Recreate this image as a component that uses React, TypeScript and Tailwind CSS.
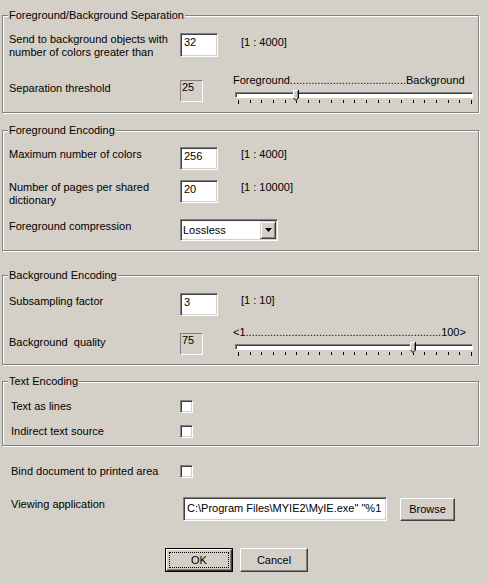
import React from 'react'

const sunken =
  'bg-white border border-t-[#808080] border-l-[#808080] border-r-white border-b-white shadow-[inset_1px_1px_0_#404040,inset_-1px_-1px_0_#d4d0c8]'

const Edit: React.FC<{ value: string; className?: string }> = ({ value, className = '' }) => (
  <div className={`${sunken} pl-[3px] pt-[2px] whitespace-nowrap overflow-hidden ${className}`}>{value}</div>
)

const ReadOnly: React.FC<{ value: string; className?: string }> = ({ value, className = '' }) => (
  <div className={`w-[23px] h-[22px] pl-[1px] border border-t-[#808080] border-l-[#808080] border-r-white border-b-white ${className}`}>
    {value}
  </div>
)

const Check: React.FC = () => <div className={`${sunken} w-[13px] h-[13px]`} />

const Group: React.FC<{ title: string; className?: string; children: React.ReactNode }> = ({
  title,
  className = '',
  children,
}) => (
  <div className={`relative w-[477px] border border-[#808080] shadow-[inset_1px_1px_0_#fff,1px_1px_0_#fff] ${className}`}>
    <span className="absolute left-[5px] top-[-7px] bg-[#d4d0c8] px-[1px] whitespace-nowrap">{title}</span>
    {children}
  </div>
)

const Slider: React.FC<{ label: string; value: number }> = ({ label, value }) => {
  const ticks = Array.from({ length: 21 }, (_, i) => i)
  return (
    <div className="w-[240px] flex flex-col">
      <div className="whitespace-nowrap">{label}</div>
      <div className="relative mt-[5px] ml-[2px] w-[238px] h-[6px] bg-white border border-t-[#808080] border-l-[#808080] border-r-white border-b-white shadow-[inset_1px_1px_0_#404040]">
        <svg
          className="absolute top-[-3px]"
          style={{ left: Math.round(value * 2.33) - 1 }}
          width="6"
          height="11"
          viewBox="0 0 6 11"
        >
          <polygon points="0,0 6,0 6,8 3,11 0,8" fill="#d4d0c8" />
          <polyline points="0.5,8 0.5,0.5 5,0.5" fill="none" stroke="#fff" strokeWidth="1" />
          <polyline points="5.5,0 5.5,8 3,10.5 0.5,8" fill="none" stroke="#000" strokeWidth="1" />
          <polyline points="4.5,1 4.5,8" fill="none" stroke="#808080" strokeWidth="1" />
        </svg>
      </div>
      <div className="mt-[2px] ml-[5px] w-[234px] flex justify-between items-start">
        {ticks.map((t) => (
          <div key={t} className={`w-px bg-black ${t === 0 || t === 20 ? 'h-[4px]' : 'h-[3px]'}`} />
        ))}
      </div>
    </div>
  )
}

export default function App() {
  return (
    <div className="w-[488px] h-[583px] bg-[#d4d0c8] text-black text-[11px] leading-[13px] font-['Liberation_Sans',Arial,sans-serif] flex flex-col pl-[2px] pt-[15px] overflow-hidden">
      <Group title="Foreground/Background Separation" className="h-[98px] pl-[6px] pt-[17px]">
        <div className="flex items-start">
          <div className="w-[171px]">
            Send to background objects with
            <br />
            number of colors greater than
          </div>
          <Edit value="32" className="w-[38px] h-[24px]" />
          <div className="ml-[23px] mt-[3px]">[1 : 4000]</div>
        </div>
        <div className="flex items-start mt-[15px]">
          <div className="w-[171px] mt-[8px]">Separation threshold</div>
          <ReadOnly value="25" className="mt-[6px]" />
          <div className="ml-[30px]">
            <Slider label={'Foreground' + '.'.repeat(38) + 'Background'} value={25} />
          </div>
        </div>
      </Group>

      <Group title="Foreground Encoding" className="mt-[17px] h-[121px] pl-[6px] pt-[16px]">
        <div className="flex items-start">
          <div className="w-[171px] mt-[1px]">Maximum number of colors</div>
          <Edit value="256" className="w-[38px] h-[23px]" />
          <div className="ml-[23px] mt-[1px]">[1 : 4000]</div>
        </div>
        <div className="flex items-start mt-[10px]">
          <div className="w-[171px] mt-[1px]">
            Number of pages per shared
            <br />
            dictionary
          </div>
          <Edit value="20" className="w-[38px] h-[23px]" />
          <div className="ml-[23px] mt-[1px]">[1 : 10000]</div>
        </div>
        <div className="flex items-start mt-[12px]">
          <div className="w-[171px] mt-[1px]">Foreground compression</div>
          <div className={`${sunken} w-[98px] h-[22px] flex items-center justify-between pl-[2px] pr-px`}>
            <span>Lossless</span>
            <div className="w-[16px] h-[18px] bg-[#d4d0c8] border border-t-[#d4d0c8] border-l-[#d4d0c8] border-r-[#404040] border-b-[#404040] shadow-[inset_1px_1px_0_#fff,inset_-1px_-1px_0_#808080] flex items-center justify-center">
              <svg width="7" height="4" viewBox="0 0 7 4">
                <polygon points="0,0 7,0 3.5,4" fill="#000" />
              </svg>
            </div>
          </div>
        </div>
      </Group>

      <Group title="Background Encoding" className="mt-[24px] h-[90px] pl-[6px] pt-[17px]">
        <div className="flex items-start">
          <div className="w-[171px] mt-[2px]">Subsampling factor</div>
          <Edit value="3" className="w-[38px] h-[23px]" />
          <div className="ml-[23px] mt-[1px]">[1 : 10]</div>
        </div>
        <div className="flex items-start mt-[10px]">
          <div className="w-[171px] mt-[10px] whitespace-pre">Background  quality</div>
          <ReadOnly value="75" className="mt-[7px]" />
          <div className="ml-[30px]">
            <Slider label={'<1' + '.'.repeat(64) + '100>'} value={75} />
          </div>
        </div>
      </Group>

      <Group title="Text Encoding" className="mt-[16px] h-[65px] pl-[8px] pt-[18px]">
        <div className="flex items-start">
          <div className="w-[169px]">Text as lines</div>
          <Check />
        </div>
        <div className="flex items-start mt-[12px]">
          <div className="w-[169px]">Indirect text source</div>
          <Check />
        </div>
      </Group>

      <div className="flex items-start mt-[19px] ml-[9px]">
        <div className="w-[169px]">Bind document to printed area</div>
        <Check />
      </div>

      <div className="flex items-start mt-[19px] ml-[9px]">
        <div className="w-[172px] mt-[1px]">Viewing application</div>
        <Edit value={'C:\\Program Files\\MYIE2\\MyIE.exe" "%1'} className="w-[204px] h-[24px] pt-[4px]" />
        <button className="ml-[13px] mt-px w-[55px] h-[23px] bg-[#d4d0c8] border border-t-white border-l-white border-r-[#404040] border-b-[#404040] shadow-[inset_-1px_-1px_0_#808080] flex items-center justify-center">
          Browse
        </button>
      </div>

      <div className="flex items-start mt-[27px] ml-[163px]">
        <button className="w-[68px] h-[24px] border border-black bg-[#d4d0c8] p-0">
          <div className="w-full h-full border border-t-white border-l-white border-r-[#404040] border-b-[#404040] shadow-[inset_-1px_-1px_0_#808080] p-[2px]">
            <div className="w-full h-full border border-dotted border-black flex items-center justify-center">OK</div>
          </div>
        </button>
        <button className="ml-[7px] w-[68px] h-[24px] bg-[#d4d0c8] border border-t-white border-l-white border-r-[#404040] border-b-[#404040] shadow-[inset_-1px_-1px_0_#808080] flex items-center justify-center">
          Cancel
        </button>
      </div>
    </div>
  )
}
